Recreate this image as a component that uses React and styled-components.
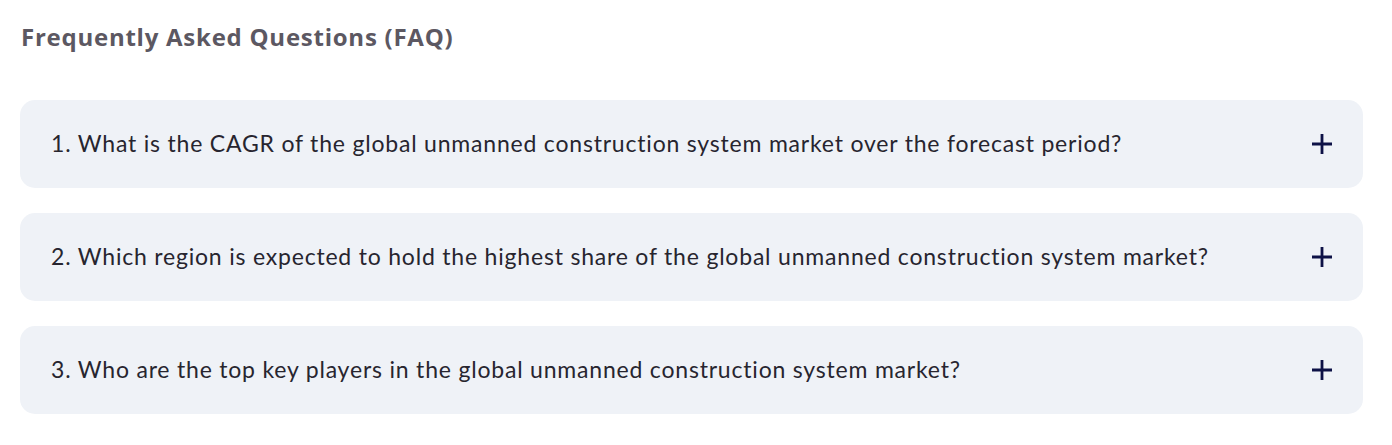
import React from "react";
import styled, { createGlobalStyle } from "styled-components";

const GlobalStyle = createGlobalStyle`
  body {
    margin: 0;
    background: #ffffff;
  }
`;

const FaqSection = styled.section`
  width: 1343px;
  padding: 22px 0 0 20px;
`;

const Title = styled.h2`
  margin: 0 0 48px 1px;
  font-family: "Open Sans", sans-serif;
  font-weight: 700;
  font-size: 24px;
  letter-spacing: 0.75px;
  line-height: 30px;
  color: #5c5862;
`;

const List = styled.div`
  display: flex;
  flex-direction: column;
  gap: 25px;
`;

const Item = styled.div`
  display: flex;
  align-items: center;
  justify-content: space-between;
  height: 88px;
  padding: 0 30px 0 31px;
  box-sizing: border-box;
  background: #eff2f7;
  border-radius: 15px;
`;

const Question = styled.span`
  margin-bottom: 3px;
  font-family: Lato, sans-serif;
  font-size: 23px;
  letter-spacing: 0.8px;
  color: #27252f;
`;

const PlusIcon = styled.svg`
  width: 22px;
  height: 22px;
  flex-shrink: 0;
`;

const questions = [
  "1. What is the CAGR of the global unmanned construction system market over the forecast period?",
  "2. Which region is expected to hold the highest share of the global unmanned construction system market?",
  "3. Who are the top key players in the global unmanned construction system market?",
];

function Plus() {
  return (
    <PlusIcon viewBox="0 0 22 22">
      <path d="M11 1v20M1 11h20" stroke="#0d1146" strokeWidth="2.8" fill="none" />
    </PlusIcon>
  );
}

export default function App() {
  return (
    <>
      <GlobalStyle />
      <FaqSection>
        <Title>Frequently Asked Questions (FAQ)</Title>
        <List>
          {questions.map((q) => (
            <Item key={q}>
              <Question>{q}</Question>
              <Plus />
            </Item>
          ))}
        </List>
      </FaqSection>
    </>
  );
}
